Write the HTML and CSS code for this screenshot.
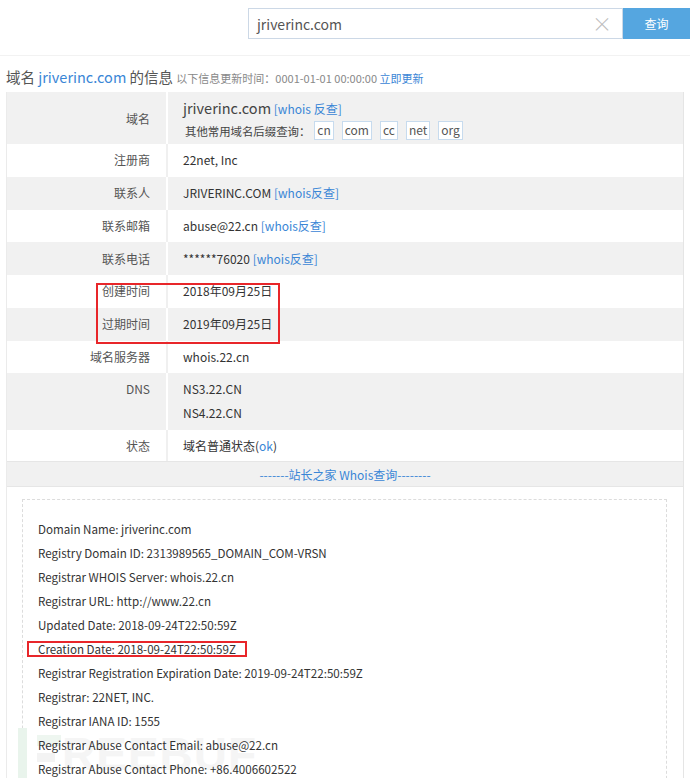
FILE: index.html
```html
<!DOCTYPE html>
<html lang="zh-CN">
<head>
<meta charset="utf-8">
<title>jriverinc.com 的信息</title>
<link rel="stylesheet" href="styles.css">
</head>
<body>
<div class="page">
  <header class="top">
    <div class="search">
      <div class="search-box">
        <span class="search-text">jriverinc.com</span>
        <span class="clear">×</span>
      </div>
      <div class="search-btn">查询</div>
    </div>
  </header>

  <h1 class="title">域名 <a class="blue">jriverinc.com</a> 的信息 <small class="sub">以下信息更新时间：0001-01-01 00:00:00 <a class="blue">立即更新</a></small></h1>

  <div class="table">
    <div class="row gray first">
      <div class="lab">域名</div>
      <div class="val">
        <div class="v">
          <div class="dom"><span class="big">jriverinc.com</span> <a class="blue">[whois 反查]</a></div>
          <div class="suffix">其他常用域名后缀查询：<span class="tag">cn</span><span class="tag">com</span><span class="tag">cc</span><span class="tag">net</span><span class="tag">org</span></div>
        </div>
      </div>
    </div>
    <div class="row white"><div class="lab">注册商</div><div class="val"><div class="v">22net, Inc</div></div></div>
    <div class="row gray"><div class="lab">联系人</div><div class="val"><div class="v">JRIVERINC.COM <a class="blue">[whois反查]</a></div></div></div>
    <div class="row white"><div class="lab">联系邮箱</div><div class="val"><div class="v">abuse@22.cn <a class="blue">[whois反查]</a></div></div></div>
    <div class="row gray"><div class="lab">联系电话</div><div class="val"><div class="v">******76020 <a class="blue">[whois反查]</a></div></div></div>
    <div class="row white"><div class="lab">创建时间</div><div class="val"><div class="v">2018年09月25日</div></div></div>
    <div class="row gray"><div class="lab">过期时间</div><div class="val"><div class="v">2019年09月25日</div></div></div>
    <div class="row white"><div class="lab">域名服务器</div><div class="val"><div class="v">whois.22.cn</div></div></div>
    <div class="row gray dns"><div class="lab">DNS</div><div class="val"><div class="v"><div class="ns">NS3.22.CN</div><div class="ns">NS4.22.CN</div></div></div></div>
    <div class="row white status"><div class="lab">状态</div><div class="val"><div class="v">域名普通状态(<a class="blue">ok</a>)</div></div></div>
    <div class="row gray head"><a class="blue">-------站长之家 Whois查询--------</a></div>
    <div class="whois-wrap">
      <div class="whois">
        <p>Domain Name: jriverinc.com</p>
        <p>Registry Domain ID: 2313989565_DOMAIN_COM-VRSN</p>
        <p>Registrar WHOIS Server: whois.22.cn</p>
        <p>Registrar URL: http://www.22.cn</p>
        <p>Updated Date: 2018-09-24T22:50:59Z</p>
        <p>Creation Date: 2018-09-24T22:50:59Z</p>
        <p>Registrar Registration Expiration Date: 2019-09-24T22:50:59Z</p>
        <p>Registrar: 22NET, INC.</p>
        <p>Registrar IANA ID: 1555</p>
        <p>Registrar Abuse Contact Email: abuse@22.cn</p>
        <p>Registrar Abuse Contact Phone: +86.4006602522</p>
      </div>
    </div>
  </div>

  <div class="mark mark-date"></div>
  <div class="mark mark-creation"></div>
  <div class="watermark">
    <span class="wm-bar"></span><span class="wm-arm1"></span><span class="wm-arm2"></span><span class="wm-text">REEBUF</span>
  </div>
</div>
</body>
</html>
```

FILE: styles.css
```css
html, body {
  margin: 0;
  padding: 0;
  background: #fff;
}
body {
  font-family: "Noto Sans CJK SC", "Noto Sans", sans-serif;
  font-size: 12px;
  color: #333;
  overflow: hidden;
}
.page {
  position: relative;
  width: 690px;
  height: 778px;
  overflow: hidden;
}
a { text-decoration: none; }
.blue { color: #3a86d6; }

.top {
  height: 56px;
  border-bottom: 1px solid #f2f2f2;
  box-sizing: border-box;
  padding-top: 8px;
}
.search {
  display: flex;
  margin-left: 248px;
  height: 31px;
}
.search-box {
  width: 375px;
  box-sizing: border-box;
  border: 1px solid #ccd8e6;
  display: flex;
  align-items: center;
  justify-content: space-between;
  padding: 0 10px 0 8px;
}
.search-text {
  font-size: 14px;
  color: #555;
}
.clear {
  font-size: 20px;
  color: #bbb;
  font-weight: 300;
  line-height: 1;
}
.search-btn {
  width: 67px;
  background: #55a6e0;
  color: #fff;
  display: flex;
  align-items: center;
  justify-content: center;
  font-size: 12px;
}

.title {
  margin: 8px 0 0 6px;
  font-size: 14.5px;
  font-weight: normal;
  color: #555;
  line-height: 26px;
  height: 26px;
}
.sub {
  font-size: 11px;
  color: #888;
}

.table {
  margin: 2px 6px 0 6px;
  border-left: 1px solid #ebebeb;
  border-right: 1px solid #e5e5e5;
  width: 678px;
  box-sizing: border-box;
}
.row {
  display: flex;
  height: 32.75px;
  box-sizing: border-box;
  align-items: center;
}
.gray { background: #f1f1f1; }
.white { background: #fff; }
.lab {
  width: 159px;
  box-sizing: border-box;
  text-align: right;
  padding-right: 16px;
  color: #555;
  line-height: 20px;
}
.val {
  flex: 1;
  align-self: stretch;
  display: flex;
  align-items: center;
  padding-left: 15px;
  border-left: 2px solid #fafafa;
  line-height: 20px;
  color: #333;
}
.gray .val { border-left-color: #fff; }
.white .val { border-left-color: #f0f0f0; }

.first { height: 52px; }
.first .lab { padding-top: 2px; }
.first .v { padding-top: 1px; }
.dom { line-height: 22px; }
.big { font-size: 14.5px; color: #444; }
.first .blue { font-size: 12px; }
.suffix {
  display: flex;
  align-items: center;
  color: #444;
  line-height: 18px;
  margin-top: 1px;
  padding-left: 2px;
  font-size: 11.4px;
}
.tag {
  display: inline-block;
  border: 1px solid #c7dbee;
  background: #fff;
  padding: 0 2px;
  margin-right: 8px;
  height: 17px;
  line-height: 16px;
  color: #555;
  font-size: 12px;
}
.suffix .tag:first-of-type { margin-left: 4px; }

.dns {
  height: 57px;
  align-items: flex-start;
}
.dns .lab { padding-top: 6px; }
.dns .val {
  align-items: flex-start;
  padding-top: 4px;
}
.ns { height: 24px; line-height: 24px; }
.status { height: 31px; }
.head {
  height: 26px;
  justify-content: center;
  border-top: 1px solid #e6e6e6;
  border-bottom: 1px solid #e6e6e6;
  font-size: 12px;
}

.whois-wrap {
  padding: 12px 16px 0 15px;
  height: 300px;
}
.whois {
  border: 1px dashed #dcdcdc;
  border-bottom: none;
  padding: 17px 15px 0 15px;
  height: 300px;
  box-sizing: border-box;
}
.whois p {
  margin: 0;
  line-height: 24px;
  height: 24px;
  font-size: 11.6px;
  color: #333;
  position: relative;
  z-index: 2;
}

.mark {
  position: absolute;
  border: 2px solid #e8262a;
  box-sizing: border-box;
  z-index: 3;
}
.mark-date {
  left: 96px;
  top: 283px;
  width: 184px;
  height: 61px;
}
.mark-creation {
  left: 27px;
  top: 641px;
  width: 220px;
  height: 16px;
}

.watermark {
  position: absolute;
  left: 18px;
  top: 728px;
  width: 220px;
  height: 50px;
  z-index: 1;
}
.wm-bar {
  position: absolute;
  left: 0;
  top: 0;
  width: 9px;
  height: 50px;
  background: #e9f4ec;
}
.wm-arm1 {
  position: absolute;
  left: 19px;
  top: 7px;
  width: 24px;
  height: 11px;
  background: #eef6f0;
}
.wm-arm2 {
  position: absolute;
  left: 19px;
  top: 25px;
  width: 18px;
  height: 9px;
  background: #f3f3f3;
}
.wm-text {
  position: absolute;
  left: 44px;
  top: 2px;
  font-family: "Liberation Sans", sans-serif;
  font-weight: bold;
  font-size: 46px;
  line-height: 48px;
  color: #f5f5f5;
  letter-spacing: 1px;
}
```
